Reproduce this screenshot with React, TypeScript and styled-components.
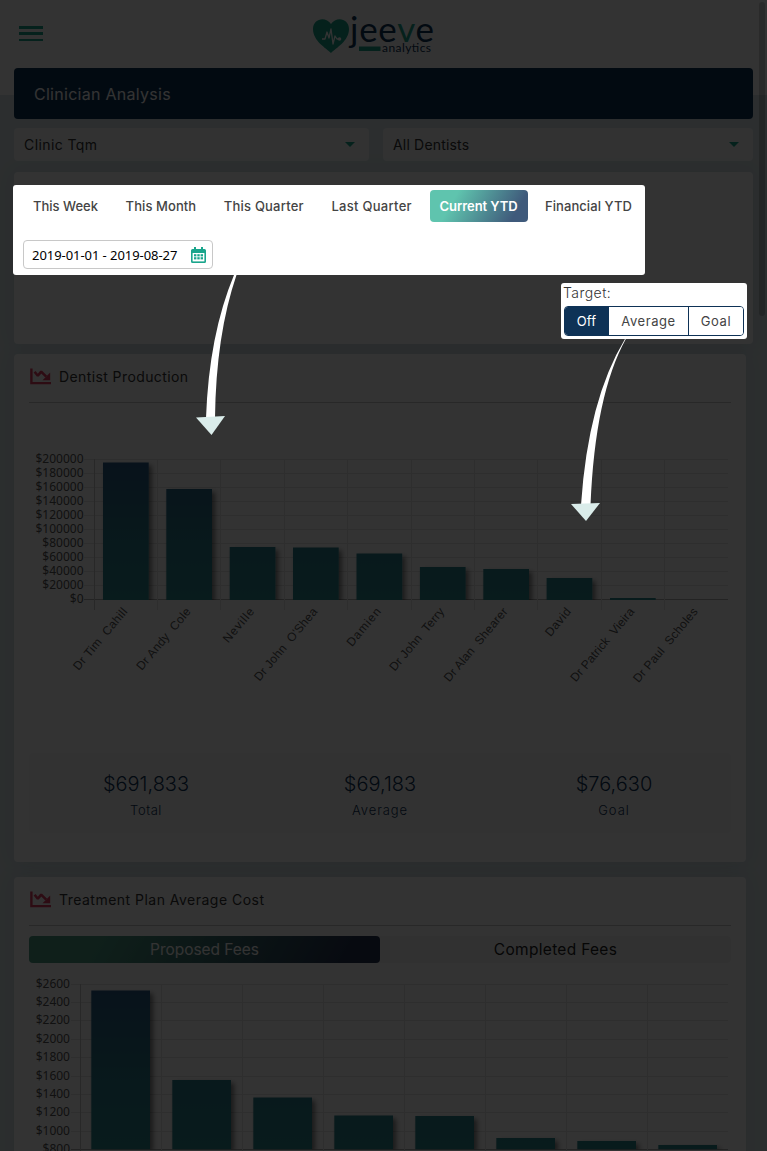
import React from "react";
import styled, { createGlobalStyle } from "styled-components";

const teal = "#1aa58c";
const navy = "#0e3256";

const GlobalStyle = createGlobalStyle`
  * { box-sizing: border-box; }
  html, body { margin: 0; height: 100%; overflow: hidden; background: #2b2f2f; }
  body { font-family: Inter, "Open Sans", sans-serif; }
`;

const Page = styled.div`
  position: relative;
  width: 767px;
  height: 1151px;
  overflow: hidden;
  background: linear-gradient(#fff 0 95px, #dae6e8 95px);
`;

const Backdrop = styled.div`
  position: absolute;
  inset: 0;
  z-index: 2;
  background: rgba(0, 0, 0, 0.8);
`;

const ScrollThumb = styled.div`
  position: absolute;
  top: 2px;
  right: 2px;
  width: 6px;
  height: 314px;
  border-radius: 3px;
  background: rgba(0, 0, 0, 0.18);
`;

const Header = styled.header`
  display: flex;
  height: 68px;
  padding: 0 19px;
`;

const MenuButton = styled.div`
  display: flex;
  flex-direction: column;
  justify-content: space-between;
  width: 24px;
  height: 15px;
  margin-top: 26px;
`;

const MenuBar = styled.span`
  height: 2.5px;
  background: ${teal};
`;

const Logo = styled.svg`
  width: 126px;
  height: 56px;
  margin: 2px 0 0 268px;
`;

const Main = styled.main`
  display: flex;
  flex-direction: column;
  width: 739px;
  margin-left: 14px;
`;

const TitleBar = styled.div`
  display: flex;
  align-items: center;
  height: 51px;
  padding: 1px 20px 0;
  border-radius: 4px;
  background: ${navy};
  color: #fff;
  font-size: 16px;
  font-weight: 400;
  letter-spacing: 0.28px;
`;

const Selects = styled.div`
  display: grid;
  grid-template-columns: 355px 370px;
  gap: 14px;
  margin: 9px 0 11px;
`;

const Select = styled.div<{ $spacing: number }>`
  display: flex;
  align-items: center;
  justify-content: space-between;
  height: 33px;
  padding: 0 14px 0 10px;
  border-radius: 4px;
  background: #f8fbfb;
  color: #333;
  font-size: 14px;
  letter-spacing: ${(p) => p.$spacing}px;
`;

const Caret = styled.i`
  border: 5px solid transparent;
  border-top-color: ${teal};
  border-bottom: 0;
`;

const FilterPanel = styled.section`
  display: flex;
  flex-direction: column;
  height: 172px;
  padding-top: 13px;
  border-radius: 4px;
  background: #fff;
  box-shadow: 0 0 22px rgba(40, 40, 100, 0.08);
`;

const PeriodBox = styled.div`
  position: relative;
  z-index: 3;
  width: 632px;
  height: 90px;
  margin-left: -1px;
  padding: 5px 3px 0 10px;
  border-radius: 3px;
  background: #fff;
`;

const Periods = styled.div`
  display: flex;
  justify-content: space-between;
`;

const Period = styled.div<{ $width: number; $active?: boolean; $spacing?: number }>`
  display: flex;
  align-items: center;
  justify-content: center;
  width: ${(p) => p.$width}px;
  height: 32px;
  border-radius: 4px;
  background: ${(p) => (p.$active ? "linear-gradient(120deg, #5fc4ae 25%, #3f5a7b 85%)" : "none")};
  color: ${(p) => (p.$active ? "#fff" : "#444")};
  font-size: 13px;
  font-weight: ${(p) => (p.$active ? 600 : 500)};
  letter-spacing: ${(p) => p.$spacing ?? 0}px;
  white-space: nowrap;
`;

const DateRange = styled.div`
  display: flex;
  align-items: center;
  justify-content: space-between;
  width: 190px;
  height: 29px;
  margin-top: 18px;
  padding: 1px 6px 0 8px;
  border: 1px solid #c8c8c8;
  border-radius: 4px;
  color: #000;
  font: 13px "Noto Sans", sans-serif;
  letter-spacing: -0.06px;
`;

const TargetBox = styled.div`
  position: relative;
  z-index: 3;
  align-self: flex-end;
  width: 186px;
  height: 56px;
  margin: 8px 6px 0 0;
  padding: 1px 3px 3px;
  border-radius: 3px;
  background: #fff;
`;

const TargetLabel = styled.div`
  height: 22px;
  margin-left: -1px;
  color: #333;
  font-size: 14px;
  font-weight: 300;
  line-height: 17px;
  letter-spacing: 0.45px;
`;

const Segments = styled.div`
  display: grid;
  grid-template-columns: 44px 80px 1fr;
  height: 30px;
  overflow: hidden;
  border: 1px solid ${navy};
  border-radius: 4px;
`;

const Segment = styled.div<{ $active?: boolean }>`
  display: flex;
  align-items: center;
  justify-content: center;
  border-right: 1px solid ${navy};
  background: ${(p) => (p.$active ? navy : "#fff")};
  color: ${(p) => (p.$active ? "#fff" : "#444")};
  font-size: 13px;
  letter-spacing: ${(p) => (p.$active ? 0.1 : 0.55)}px;
  &:last-child { border-right: 0; }
`;

const Card = styled.section<{ $height: number; $gap: number }>`
  width: 732px;
  height: ${(p) => p.$height}px;
  margin-top: ${(p) => p.$gap}px;
  padding: 0 15px;
  border-radius: 4px;
  background: #fff;
  box-shadow: 0 0 22px rgba(40, 40, 100, 0.08);
`;

const CardTitle = styled.div<{ $spacing: number }>`
  display: flex;
  align-items: center;
  gap: 8px;
  height: 49px;
  padding-bottom: 4px;
  border-bottom: 1px solid #c9c9c9;
  color: #333;
  font-size: 14px;
  letter-spacing: ${(p) => p.$spacing}px;
`;

const Chart = styled.svg<{ $pull: number }>`
  display: block;
  margin-left: -15px;
  margin-top: ${(p) => p.$pull}px;
`;

const AxisText = styled.text`
  fill: #555;
  font: 12px "Noto Sans", sans-serif;
`;

const NameText = styled.text`
  fill: #555;
  font: 12px "Liberation Sans", Arial, sans-serif;
  white-space: pre;
`;

const Stats = styled.div`
  display: grid;
  grid-template-columns: repeat(3, 1fr);
  height: 80px;
  padding-top: 17px;
  border-radius: 4px;
  background: #fafafb;
  color: ${navy};
  text-align: center;
`;

const StatValue = styled.div`
  height: 28px;
  font-size: 20px;
  font-weight: 300;
  line-height: 28px;
`;

const StatName = styled.div<{ $spacing: number }>`
  font-size: 13px;
  font-weight: 300;
  line-height: 25px;
  letter-spacing: ${(p) => p.$spacing}px;
`;

const FeeTabs = styled.div`
  display: grid;
  grid-template-columns: 1fr 1fr;
  height: 27px;
  margin-top: 10px;
  border-radius: 4px;
  background: #f6f6f6;
`;

const FeeTab = styled.div<{ $active?: boolean }>`
  display: flex;
  align-items: center;
  justify-content: center;
  border-radius: 4px;
  background: ${(p) => (p.$active ? "linear-gradient(120deg, #4a9b83 20%, #263452 90%)" : "none")};
  color: ${(p) => (p.$active ? "#fff" : "#222")};
  font-size: 15.5px;
  font-weight: 400;
  letter-spacing: ${(p) => (p.$active ? -0.05 : 0.3)}px;
`;

const Arrows = styled.svg`
  position: absolute;
  top: 0;
  left: 0;
  z-index: 4;
  pointer-events: none;
`;

const TrendIcon = () => (
  <svg width="22" height="17" viewBox="0 0 22 17" fill="none">
    <path d="M2.400 0.500v14.600H22" stroke="#e23d62" strokeWidth="2.4" />
    <path d="M5.600 3.800l3.200 4L12.200 3.600l5 5" stroke="#e23d62" strokeWidth="2.600" strokeLinejoin="bevel" />
    <path d="M21.200 4.500v7.700h-7.700z" fill="#e23d62" />
  </svg>
);

const CalendarIcon = () => (
  <svg width="15" height="17" viewBox="0 0 15 17">
    <path d="M1.500 2h12A1.500 1.500 0 0 1 15 3.500V14.500A1.500 1.500 0 0 1 13.500 16h-12A1.500 1.500 0 0 1 0 14.500V3.500A1.500 1.500 0 0 1 1.500 2z" fill={teal} />
    <path d="M1.600 6h11.800v8.400H1.600z" fill="#fff" />
    <path d="M3 0h2v3H3zM10 0h2v3h-2z" fill={teal} />
    {[7.2, 10.2].map((y) => [3, 6.3, 9.6].map((x) => <rect key={`${x}-${y}`} x={x} y={y} width="2.400" height="2.200" fill={teal} />))}
  </svg>
);

type Bar = { x: number; top: number };

const Bars = ({ bars, width, base, id, from }: { bars: Bar[]; width: number; base: number; id: string; from: number }) => (
  <g>
    <defs>
      <linearGradient id={id} gradientUnits="userSpaceOnUse" x1="0" x2="0" y1={from} y2={base}>
        <stop offset="0" stopColor="#2b5a85" />
        <stop offset="0.6" stopColor="#2b7c8a" />
        <stop offset="1" stopColor="#2c868d" />
      </linearGradient>
      <filter id={`${id}-shadow`} x="-20%" y="-20%" width="150%" height="150%">
        <feDropShadow dx="3" dy="3" stdDeviation="2.500" floodColor="#000" floodOpacity="0.5" />
      </filter>
      <clipPath id={`${id}-clip`}>
        <rect x="0" y="0" width="732" height={base} />
      </clipPath>
    </defs>
    <g clipPath={`url(#${id}-clip)`}>
      {bars.map((b) => (
        <rect key={b.x} x={b.x} y={b.top} width={width} height={Math.max(base - b.top, 1)} fill={`url(#${id})`} filter={base - b.top > 4 ? `url(#${id}-shadow)` : undefined} />
      ))}
    </g>
  </g>
);

const production = [
  { x: 89, top: 52.5, name: "Dr Tim  Cahill", length: 77 },
  { x: 152.3, top: 79, name: "Dr Andy  Cole", length: 77 },
  { x: 215.7, top: 137, name: "Neville", length: 41 },
  { x: 279, top: 137.5, name: "Dr John  O'Shea", length: 91 },
  { x: 342.5, top: 143.5, name: "Damien", length: 46 },
  { x: 405.9, top: 157, name: "Dr John  Terry", length: 78 },
  { x: 469.3, top: 159, name: "Dr Alan  Shearer", length: 92 },
  { x: 532.6, top: 168, name: "David", length: 33 },
  { x: 596, top: 188, name: "Dr Patrick  Vieira", length: 92 },
  { x: 659.4, top: 189.5, name: "Dr Paul  Scholes", length: 93 },
];
const productionLines = [80.5, 143.5, 206.5, 270.5, 333.5, 397.5, 460.5, 523.5, 587.5, 650.5];

const ProductionChart = () => (
  <Chart $pull={7} width="732" height="343">
    {Array.from({ length: 11 }, (_, i) => {
      const y = 49.5 + i * 14;
      return (
        <g key={i}>
          <path d={`M70 ${y}H714`} stroke={i === 10 ? "#b0b0b0" : "#e4e4e4"} />
          <AxisText x="69.500" y={y + 3} textAnchor="end">${200000 - i * 20000}</AxisText>
        </g>
      );
    })}
    {productionLines.map((x, i) => (
      <path key={x} d={`M${x} 49V200`} stroke={i === 0 ? "#c8c8c8" : "#e4e4e4"} />
    ))}
    <Bars id="production" bars={production.slice(0, 9)} width={45.7} base={190} from={49} />
    {production.map((p) => (
      <NameText key={p.name} textAnchor="end" textLength={p.length} transform={`translate(${p.x + 25} 202) rotate(-50)`}>{p.name}</NameText>
    ))}
  </Chart>
);

const planBars = [
  { x: 77.3, top: 27.5 },
  { x: 158.3, top: 117 },
  { x: 239.3, top: 134.5 },
  { x: 320.3, top: 152.5 },
  { x: 401.3, top: 153 },
  { x: 482.3, top: 175 },
  { x: 563.3, top: 178 },
  { x: 644.3, top: 182 },
];
const planRows = [21.5, 39.5, 57.5, 76.5, 94.5, 113.5, 131.5, 149.5, 168.5, 186.5];

const PlanChart = () => (
  <Chart $pull={0} width="732" height="188">
    {planRows.map((y, i) => (
      <g key={y}>
        <path d={`M57 ${y}H714`} stroke={i === 9 ? "#b0b0b0" : "#e4e4e4"} />
        <AxisText x="56" y={y + 3} textAnchor="end">${2600 - i * 200}</AxisText>
      </g>
    ))}
    {planBars.map((_, i) => (
      <path key={i} d={`M${66.5 + i * 81} 21V188`} stroke={i === 0 ? "#c8c8c8" : "#e4e4e4"} />
    ))}
    <Bars id="plan" bars={planBars} width={58.7} base={186.5} from={21} />
  </Chart>
);

export default function App() {
  return (
    <Page>
      <GlobalStyle />
      <Header>
        <MenuButton><MenuBar /><MenuBar /><MenuBar /></MenuButton>
        <Logo viewBox="311 2 126 56">
          <path d="M331 53C326 48 313 41 313 29c0-11 13-13 18-5 5-8 18-6 18 5 0 12-13 19-18 24z" fill={teal} />
          <path d="M322 39h3l2-7 2 6 2-9 2 15 2-8 2 3h2" fill="none" stroke="#fff" strokeWidth="1.300" strokeLinejoin="round" />
          <circle cx="339.500" cy="39" r="1.800" fill="#fff" />
          <text x="350" y="41.500" textLength="84" fontFamily="Lato" fontSize="35" fill={navy}>jee<tspan fill={teal}>v</tspan>e</text>
          <path d="M359 46.500h21.500v4.500h-21.500z" fill={teal} />
          <text x="382" y="51.500" textLength="49" fontFamily="Lato" fontSize="12" fill={navy}>analytics</text>
        </Logo>
      </Header>
      <Main>
        <TitleBar>Clinician Analysis</TitleBar>
        <Selects>
          <Select $spacing={0.4}>Clinic Tqm<Caret /></Select>
          <Select $spacing={0.18}>All Dentists<Caret /></Select>
        </Selects>
        <FilterPanel>
          <PeriodBox>
            <Periods>
              <Period $width={85}>This Week</Period>
              <Period $width={91} $spacing={0.08}>This Month</Period>
              <Period $width={100} $spacing={0.2}>This Quarter</Period>
              <Period $width={101} $spacing={0.28}>Last Quarter</Period>
              <Period $width={98} $active $spacing={-0.05}>Current YTD</Period>
              <Period $width={107} $spacing={0.08}>Financial YTD</Period>
            </Periods>
            <DateRange>2019-01-01 - 2019-08-27<CalendarIcon /></DateRange>
          </PeriodBox>
          <TargetBox>
            <TargetLabel>Target:</TargetLabel>
            <Segments>
              <Segment $active>Off</Segment>
              <Segment>Average</Segment>
              <Segment>Goal</Segment>
            </Segments>
          </TargetBox>
        </FilterPanel>
        <Card $height={508} $gap={10}>
          <CardTitle $spacing={0.4}><TrendIcon />Dentist Production</CardTitle>
          <ProductionChart />
          <Stats>
            <div><StatValue>$691,833</StatValue><StatName $spacing={0.55}>Total</StatName></div>
            <div><StatValue>$69,183</StatValue><StatName $spacing={0.9}>Average</StatName></div>
            <div><StatValue>$76,630</StatValue><StatName $spacing={1}>Goal</StatName></div>
          </Stats>
        </Card>
        <Card $height={290} $gap={15}>
          <CardTitle $spacing={0.48}><TrendIcon />Treatment Plan Average Cost</CardTitle>
          <FeeTabs>
            <FeeTab $active>Proposed Fees</FeeTab>
            <FeeTab>Completed Fees</FeeTab>
          </FeeTabs>
          <PlanChart />
        </Card>
      </Main>
      <ScrollThumb />
      <Backdrop />
      <Arrows width="767" height="1151">
        <path d="M234 275h2.500Q216 335 215 418L206 418Q209 335 234 275z" fill="#fff" />
        <path d="M196 417.500l29-1.500-13.500 19z" fill="#daecea" />
        <path d="M625 339h.8Q595 395 590.500 505h-9.500Q588 400 625 339z" fill="#fff" />
        <path d="M571 504l29-1-14 18z" fill="#daecea" />
      </Arrows>
    </Page>
  );
}
